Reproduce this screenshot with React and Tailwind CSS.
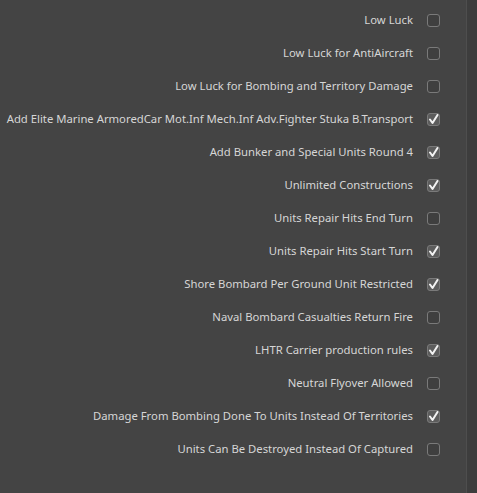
const options = [
  { label: 'Low Luck', checked: false },
  { label: 'Low Luck for AntiAircraft', checked: false },
  { label: 'Low Luck for Bombing and Territory Damage', checked: false },
  { label: 'Add Elite Marine ArmoredCar Mot.Inf Mech.Inf Adv.Fighter Stuka B.Transport', checked: true },
  { label: 'Add Bunker and Special Units Round 4', checked: true },
  { label: 'Unlimited Constructions', checked: true },
  { label: 'Units Repair Hits End Turn', checked: false },
  { label: 'Units Repair Hits Start Turn', checked: true },
  { label: 'Shore Bombard Per Ground Unit Restricted', checked: true },
  { label: 'Naval Bombard Casualties Return Fire', checked: false },
  { label: 'LHTR Carrier production rules', checked: true },
  { label: 'Neutral Flyover Allowed', checked: false },
  { label: 'Damage From Bombing Done To Units Instead Of Territories', checked: true },
  { label: 'Units Can Be Destroyed Instead Of Captured', checked: false },
];

function Checkbox({ checked }) {
  return (
    <span
      className={
        checked
          ? 'flex h-[13px] w-[13px] items-center justify-center rounded-[3px] border border-[#7a7a7a] bg-[#5c5c5c]'
          : 'flex h-[13px] w-[13px] items-center justify-center rounded-[3px] border border-[#7a7a7a] bg-[#3f3f3f]'
      }
    >
      {checked && (
        <svg width="11" height="11" viewBox="0 0 11 11">
          <path d="M2 5.5 L4.5 9 L9.5 1" fill="none" stroke="#f2f2f2" strokeWidth="2" strokeLinecap="round" strokeLinejoin="round" />
        </svg>
      )}
    </span>
  );
}

export default function App() {
  return (
    <div className="flex h-[493px] w-[477px] bg-[#444444] font-['Noto_Sans',sans-serif] text-[11.3px] text-[#d6d6d6]">
      <div className="flex w-[466px] flex-col pt-[4px]">
        {options.map((opt) => (
          <div key={opt.label} className="flex h-[33px] items-center justify-end">
            <span className="mr-[14px] whitespace-nowrap">{opt.label}</span>
            <span className="mr-[26px]">
              <Checkbox checked={opt.checked} />
            </span>
          </div>
        ))}
      </div>
      <div className="flex-1 border-l border-[#4e4e4e] bg-[#3d3d3d]" />
    </div>
  );
}
